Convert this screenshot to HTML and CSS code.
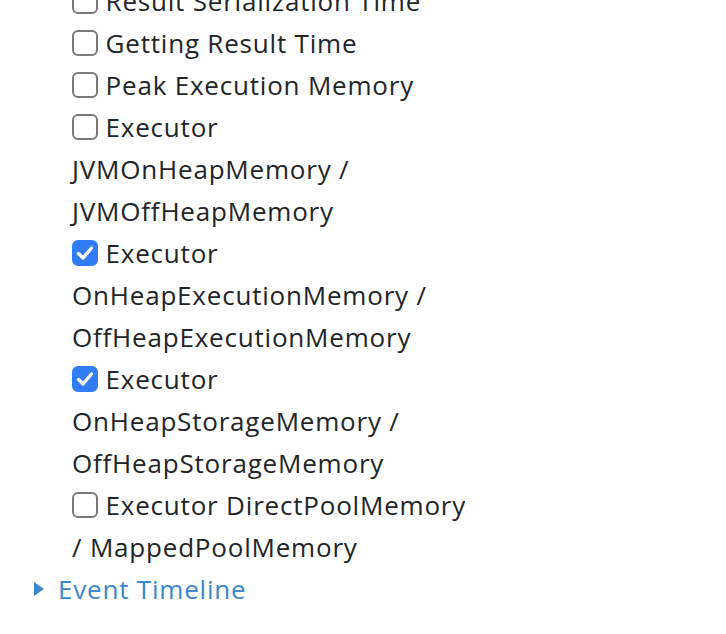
FILE: index.html
```html
<!DOCTYPE html>
<html>
<head>
<meta charset="utf-8">
<link rel="stylesheet" href="styles.css">
</head>
<body>
<div class="page">
  <ul class="metrics">
    <li><label><span class="box"></span> Result Serialization Time</label></li>
    <li><label><span class="box"></span> Getting Result Time</label></li>
    <li><label><span class="box"></span> Peak Execution Memory</label></li>
    <li><label><span class="box"></span> Executor JVMOnHeapMemory / JVMOffHeapMemory</label></li>
    <li><label><span class="box checked"><svg viewBox="0 0 26 26" width="26" height="26"><path d="M6.5 13.5 L11 18 L19.5 8" fill="none" stroke="#fff" stroke-width="3.4" stroke-linecap="round" stroke-linejoin="round"/></svg></span> Executor OnHeapExecutionMemory / OffHeapExecutionMemory</label></li>
    <li><label><span class="box checked"><svg viewBox="0 0 26 26" width="26" height="26"><path d="M6.5 13.5 L11 18 L19.5 8" fill="none" stroke="#fff" stroke-width="3.4" stroke-linecap="round" stroke-linejoin="round"/></svg></span> Executor OnHeapStorageMemory / OffHeapStorageMemory</label></li>
    <li><label><span class="box"></span> Executor DirectPoolMemory / MappedPoolMemory</label></li>
  </ul>
  <div class="timeline"><span class="arrow"></span><a class="link">Event Timeline</a></div>
</div>
</body>
</html>
```
FILE: styles.css
```css
html, body {
  margin: 0;
  padding: 0;
  background: #ffffff;
}
body {
  font-family: "Open Sans", "Noto Sans", "Liberation Sans", sans-serif;
  font-size: 26px;
  letter-spacing: 0.8px;
  line-height: 42px;
  color: #212529;
}
.page {
  margin-top: -20px;
  padding-left: 34px;
}
.metrics {
  list-style: none;
  margin: 0;
  padding: 0 0 0 38px;
  width: 402px;
}
.metrics li {
  margin: 0;
}
.box {
  display: inline-block;
  box-sizing: border-box;
  width: 26px;
  height: 26px;
  border: 2px solid #7a7a7a;
  border-radius: 6px;
  vertical-align: -3px;
  background: #fff;
  position: relative;
}
.box.checked {
  background: #2f7cf6;
  border-color: #2f7cf6;
}
.box svg {
  position: absolute;
  left: -2px;
  top: -2px;
}
.timeline {
  display: flex;
  align-items: center;
  height: 42px;
}
.arrow {
  width: 0;
  height: 0;
  border-top: 7px solid transparent;
  border-bottom: 7px solid transparent;
  border-left: 10px solid #3a87cf;
  margin-right: 14px;
}
.link {
  color: #3a87cf;
}
```
